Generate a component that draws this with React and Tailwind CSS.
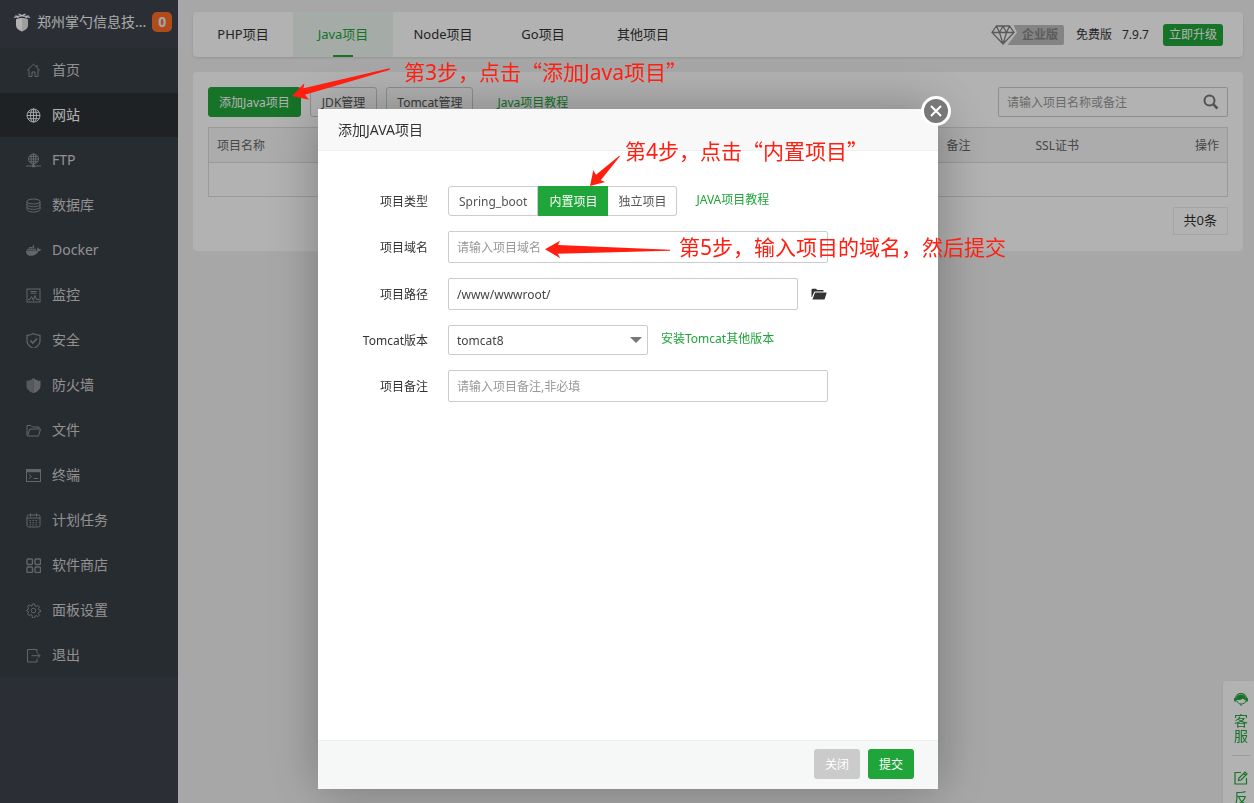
import { useState } from 'react';
import { FaDocker } from 'react-icons/fa';

const icons = {
  home: (
    <path d="M1 7.500 7.500 1.200 14 7.500M3 6.500V13.500h3V9h3v4.500h3V6.500M11 2v2.500" />
  ),
  globe: (
    <>
      <circle cx="7.500" cy="7.500" r="6.500" />
      <ellipse cx="7.500" cy="7.500" rx="3" ry="6.500" />
      <path d="M7.500 1v13M1 7.500h13M2.200 4.300h10.600M2.200 10.700h10.600" />
    </>
  ),
  ftp: (
    <>
      <circle cx="7.500" cy="6" r="5" />
      <ellipse cx="7.500" cy="6" rx="2.300" ry="5" />
      <path d="M7.500 1v12M2.500 6h10M3.300 3.500h8.400M3.300 8.500h8.400M0 13h15" />
      <path d="M6 13h3" strokeWidth="2.500" />
    </>
  ),
  database: (
    <>
      <ellipse cx="7.500" cy="3.500" rx="6.500" ry="2.500" />
      <path d="M1 3.500v8c0 1.400 2.900 2.500 6.500 2.500s6.500-1.100 6.500-2.500v-8M1 6.200c0 1.400 2.900 2.500 6.500 2.500S14 7.600 14 6.200M1 8.900c0 1.400 2.900 2.500 6.500 2.500s6.500-1.100 6.500-2.500" />
    </>
  ),
  monitor: (
    <>
      <rect x="1" y="1" width="13" height="13" />
      <path d="M4.500 3.500h6M4.500 5.200h6M2 11.500h2l1.500-3 2 4 1.500-5 1.500 4H13" />
    </>
  ),
  shield: (
    <>
      <path d="M7.500 0.500C5.500 2 3.500 2.200 1 2.300V8c0 3.500 3 5.800 6.500 7.500C11 13.800 14 11.500 14 8V2.300C11.500 2.200 9.500 2 7.500 0.500z" strokeWidth="1.200" />
      <path d="m4.300 7.500 2.500 2.500 4.200-4.500" strokeWidth="1.600" />
    </>
  ),
  firewall: (
    <>
      <path d="M7.500 0 5.800 1v1L4.200 1.500v1.200L2.800 2v1L0.500 2.500V8c0 3.500 3.500 5.800 7 7.500z" fill="currentColor" stroke="none" opacity="0.800" />
      <path d="m7.500 0 1.700 1v1l1.600-.5v1.200l1.400-.7v1l2.300-.5V8c0 3.500-3.500 5.800-7 7.500z" fill="currentColor" stroke="none" />
    </>
  ),
  folder: (
    <path d="M1 12.500V2.500h4l1.500 1.500h6.500v2M1.500 13 3.800 6H14.500L12.500 13z" />
  ),
  terminal: (
    <>
      <rect x="0.500" y="1.500" width="14" height="12" />
      <path d="M0.500 3h14" strokeWidth="2.500" />
      <path d="m3 6.500 2.500 2L3 10.500M7.500 10.500H12" />
    </>
  ),
  calendar: (
    <>
      <rect x="1" y="2" width="13" height="12" rx="1.500" />
      <path d="M1 5h13M4.500 0.500v3M10.500 0.500v3" />
      <path d="M3.500 7.500h8M3.500 9.700h8M3.500 11.900h8" strokeDasharray="1.500 1.500" />
    </>
  ),
  store: (
    <g strokeWidth="1.400">
      <rect x="1" y="1" width="5.500" height="5.500" rx="1" />
      <rect x="9" y="1" width="5.500" height="5.500" rx="1" />
      <rect x="1" y="9" width="5.500" height="5.500" rx="1" />
      <rect x="9" y="9" width="5.500" height="5.500" rx="1" />
    </g>
  ),
  gear: (
    <>
      <circle cx="7.500" cy="7.500" r="2.300" />
      <path d="M6.400 1h2.200l.4 1.900 1.200.5 1.700-1 1.500 1.500-1 1.700.5 1.200 1.600.4v1.600l-1.600.4-.5 1.200 1 1.700-1.500 1.500-1.700-1-1.200.5-.4 1.900H6.400L6 12.100l-1.200-.5-1.700 1-1.500-1.500 1-1.700-.5-1.200L.800 8V7l1.300-.8.5-1.200-1-1.700 1.500-1.500 1.700 1L6 2.900z" />
    </>
  ),
  exit: <path d="M11 4.500V1.500H1.500v12.500H11v-3M5.500 7.700h8.500M11.500 5.200 14 7.700l-2.500 2.500" />,
};

const menu = [
  { name: '首页', icon: 'home' },
  { name: '网站', icon: 'globe', active: true },
  { name: 'FTP', icon: 'ftp' },
  { name: '数据库', icon: 'database' },
  { name: 'Docker', icon: 'docker' },
  { name: '监控', icon: 'monitor' },
  { name: '安全', icon: 'shield' },
  { name: '防火墙', icon: 'firewall' },
  { name: '文件', icon: 'folder' },
  { name: '终端', icon: 'terminal' },
  { name: '计划任务', icon: 'calendar' },
  { name: '软件商店', icon: 'store' },
  { name: '面板设置', icon: 'gear' },
  { name: '退出', icon: 'exit' },
];

const tabs = ['PHP项目', 'Java项目', 'Node项目', 'Go项目', '其他项目'];
const projectTypes = ['Spring_boot', '内置项目', '独立项目'];

function MenuIcon({ name }) {
  if (name === 'docker') return <FaDocker className="size-[15px]" />;
  return (
    <svg className="size-[15px]" viewBox="0 0 15 15" fill="none" stroke="currentColor" strokeWidth="1">
      {icons[name]}
    </svg>
  );
}

function Sidebar() {
  return (
    <aside className="w-[178px] shrink-0 bg-[#3e444d]">
      <div className="flex h-12 items-center pl-[13px] pb-1">
        <svg className="mr-1.5 h-[19px] w-[18px] shrink-0 text-white" viewBox="0 0 18 19" fill="none" stroke="currentColor">
          <path d="M1 4.500C5 2.200 13 2.200 17 4.500M2.500 2.500l3 2.500M15.500 2.500l-3 2.500M5.500 1l3.500 1.500L12.500 1" strokeWidth="1.300" />
          <path d="M3 6.200C5 5.300 7 5 9 5v13.500C5.500 17 3 15.500 3 12z" fill="currentColor" stroke="none" />
          <path d="M15 6.200C13 5.300 11 5 9 5v13.500c3.500-1.500 6-3 6-6.500z" fill="currentColor" stroke="none" opacity="0.850" />
        </svg>
        <span className="text-sm whitespace-nowrap text-[#f5f5f5]">郑州掌勺信息技...</span>
        <span className="ml-1.5 flex size-5 shrink-0 items-center justify-center rounded-[5px] bg-[#fc6d26] text-sm font-bold text-[#eee]">0</span>
      </div>
      <nav className="flex flex-col gap-px bg-[#383f47]">
        {menu.map((item) => (
          <a
            key={item.name}
            href="#"
            className={
              item.active
                ? 'flex h-11 items-center gap-[11px] bg-[#2d3136] pl-[26px] text-sm text-white'
                : 'flex h-11 items-center gap-[11px] pl-[26px] text-sm text-[#d0d0d0]'
            }
          >
            <span className={item.active ? 'text-[#eee]' : 'text-[#8e9194]'}>
              <MenuIcon name={item.icon} />
            </span>
            {item.name}
          </a>
        ))}
      </nav>
    </aside>
  );
}

function TopBar() {
  return (
    <header className="flex h-[45px] items-center justify-between rounded bg-white pr-5 shadow">
      <nav className="flex h-full">
        {tabs.map((tab) => (
          <a
            key={tab}
            href="#"
            className={
              tab === 'Java项目'
                ? 'relative flex w-[100px] items-center justify-center bg-[#edf7ef] text-[13px] text-[#20a53a]'
                : 'flex w-[100px] items-center justify-center text-[13px] text-[#333]'
            }
          >
            {tab}
            {tab === 'Java项目' && <span className="absolute bottom-0 h-0.5 w-5 bg-[#20a53a]" />}
          </a>
        ))}
      </nav>
      <div className="flex items-center text-xs text-[#333]">
        <div className="flex items-center">
          <svg className="h-5 w-[26px]" viewBox="0 0 26 20" fill="none" stroke="#838383" strokeWidth="1.300">
            <path d="M26 0h-3.500L26 7.500 16.500 20H26z" fill="#bdbdbd" stroke="none" />
            <path d="M5.500 1h13L23 7.500 12 19 1 7.500zM1 7.500h22M5.500 1l3 6.500L12 19l3.500-11.500 3-6.500M8.500 7.500 12 1l3.500 6.500" />
          </svg>
          <span className="flex h-5 items-center rounded-r-xs bg-[#bdbdbd] pr-1.5 pl-[5px] text-xs font-bold text-[#858585]">企业版</span>
        </div>
        <span className="ml-3">免费版</span>
        <span className="ml-2.5">7.9.7</span>
        <button className="ml-3.5 h-[22px] rounded-[3px] bg-[#20a53a] px-1.5 text-white">立即升级</button>
      </div>
    </header>
  );
}

function ProjectList() {
  return (
    <main className="mt-[15px] rounded bg-white p-[15px] pb-4 text-xs text-[#555]">
      <div className="flex items-center justify-between">
        <div className="flex items-center">
          <button className="h-[30px] rounded-[3px] border border-[#20a53a] bg-[#20a53a] px-2.5 pt-0.5 text-white">添加Java项目</button>
          <button className="ml-[9px] h-[30px] rounded-[3px] border border-[#ccc] px-[11px] pt-0.5">JDK管理</button>
          <button className="ml-[9px] h-[30px] rounded-[3px] border border-[#ccc] px-2.5 pt-0.5">Tomcat管理</button>
          <a href="#" className="ml-6 pt-0.5 text-[#20a53a]">Java项目教程</a>
        </div>
        <div className="flex h-[30px] w-[230px] items-center rounded-xs border border-[#ccc] pr-2">
          <input aria-label="搜索" placeholder="请输入项目名称或备注" className="min-w-0 flex-1 px-2 pt-0.5 outline-none placeholder:text-[#999]" />
          <button aria-label="搜索">
            <svg className="size-4" viewBox="0 0 16 16" fill="none" stroke="#777" strokeWidth="2">
              <circle cx="6.500" cy="6.500" r="5" />
              <path d="m10.300 10.300 4.200 4.200" strokeWidth="2.600" />
            </svg>
          </button>
        </div>
      </div>
      <table className="mt-2.5 w-full table-fixed border-collapse border border-[#ddd] text-left text-[#666]">
        <thead className="bg-[#f6f6f6]">
          <tr className="h-[35px] border-b border-[#ddd]">
            <th className="px-2 pt-0.5 font-normal">项目名称</th>
            <th className="w-[89px] px-2 pt-0.5 font-normal">备注</th>
            <th className="w-[120px] px-2 pt-0.5 font-normal">SSL证书</th>
            <th className="w-20 px-2 pt-0.5 text-right font-normal">操作</th>
          </tr>
        </thead>
        <tbody>
          <tr className="h-[34px]">
            <td colSpan={4} />
          </tr>
        </tbody>
      </table>
      <div className="mt-2.5 flex justify-end">
        <span className="flex h-7 items-center border border-[#ececec] px-2.5 text-[13px] text-[#333]">共0条</span>
      </div>
    </main>
  );
}

function ServiceBar() {
  return (
    <div className="fixed top-[681px] right-0 flex w-[31px] flex-col rounded-tl bg-white pt-3 pl-[11px] text-sm leading-[15px] text-[#20a53a] shadow">
      <a href="#" className="w-3.5">
        <svg className="mb-[7px] h-[13px] w-3.5" viewBox="0 0 14 13" fill="none" stroke="currentColor">
          <path d="M1.500 6a5.500 5.500 0 0 1 11 0" strokeWidth="1.200" />
          <path d="M2 7C2 3 4.500 1.500 7 1.500S12 3 12 7C10.500 7 9.500 6.300 9 5.500 7.500 6.700 5 7.200 2 7z" fill="currentColor" stroke="none" />
          <path d="M1.300 5v3.500M12.700 5v3.500" strokeWidth="2.400" />
          <path d="M3 8c.6 2 2 3 4 3s4.500-1 5-3M6 12h2" />
        </svg>
        客服
      </a>
      <span className="mt-3 -ml-0.5 h-px w-[18px] bg-[#ddd]" />
      <a href="#" className="mt-[15px] w-3.5">
        <svg className="mb-[5px] size-3.5" viewBox="0 0 14 14" fill="none" stroke="currentColor" strokeWidth="1.200">
          <path d="M7 1.500H1v11.500h11.500V7" />
          <path d="m4.500 9.500.5-2.500 6-6 2 2-6 6zM9.500 2.500l2 2" />
        </svg>
        反馈
      </a>
    </div>
  );
}

function FormRow({ label, htmlFor, children }) {
  return (
    <div className="flex items-center">
      <label htmlFor={htmlFor} className="mr-5 w-[110px] pt-0.5 text-right text-[#333]">{label}</label>
      {children}
    </div>
  );
}

// full-width quotes, the latin font has narrow ones
function Quoted({ children }) {
  return (
    <>
      <span className="font-['Noto_Sans_CJK_SC',sans-serif]">“</span>
      {children}
      <span className="font-['Noto_Sans_CJK_SC',sans-serif]">”</span>
    </>
  );
}

function Annotations() {
  return (
    <div className="pointer-events-none text-[21px] leading-7 whitespace-nowrap text-[#ff1e10]">
      <svg className="absolute -top-[41px] -left-[26px] h-8 w-[98px]" viewBox="0 0 98 32" fill="currentColor">
        <path d="M0 28 12.300 15.300 11.500 20.300 97.500.300 98 1.700 13 26.700 17 31.700z" />
      </svg>
      <p className="absolute -top-[52px] left-[86px]">第3步，点击<Quoted>添加Java项目</Quoted></p>

      <svg className="absolute top-[46px] left-[272px] h-8 w-[30px]" viewBox="0 0 30 32" fill="currentColor">
        <path d="M0 31 3.300 15.300 6 19.700 29.300.700 30 1.300 10.700 25.300 15.300 27z" />
      </svg>
      <p className="absolute top-[27px] left-[307px]">第4步，点击<Quoted>内置项目</Quoted></p>

      <svg className="absolute top-[131px] left-[227px] h-[19px] w-[125px]" viewBox="0 0 125 19" fill="currentColor">
        <path d="M0 9.300 15 .700 13 5 125 9.700V10.700L12.700 13.700 15.300 18.300z" />
      </svg>
      <p className="absolute top-[124px] left-[361px]">第5步，输入项目的域名，然后提交</p>
    </div>
  );
}

function AddProjectDialog() {
  const [type, setType] = useState('内置项目');
  const [path, setPath] = useState('/www/wwwroot/');

  return (
    <div className="fixed inset-0 flex items-start justify-center bg-black/30 pt-[109px] pl-0.5">
      <div role="dialog" aria-label="添加JAVA项目" className="relative flex min-h-[680px] w-[620px] flex-col bg-white text-xs text-[#444] shadow-[1px_1px_50px_rgba(0,0,0,0.3)]">
        <h2 className="h-[42px] border-b border-[#eee] bg-[#f8f8f8] pl-5 text-sm leading-[41px] text-[#333]">添加JAVA项目</h2>
        <button aria-label="关闭" className="absolute -top-[13px] -right-[13px] flex size-[30px] items-center justify-center rounded-full border-[3px] border-white bg-[#787878]">
          <svg className="size-3" viewBox="0 0 12 12" stroke="#fff" strokeWidth="2">
            <path d="m1 1 10 10M11 1 1 11" />
          </svg>
        </button>

        <form className="flex flex-1 flex-col gap-[15px] pt-[35px]">
          <FormRow label="项目类型">
            <div className="flex h-[30px]">
              {projectTypes.map((item) => (
                <button
                  key={item}
                  type="button"
                  onClick={() => setType(item)}
                  className={
                    item === type
                      ? 'border border-[#20a53a] bg-[#20a53a] px-2.5 pt-0.5 text-white'
                      : 'border border-[#ccc] px-2.5 pt-0.5 text-[#555] first:rounded-l-[3px] last:rounded-r-[3px] last:border-l-0'
                  }
                >
                  {item}
                </button>
              ))}
            </div>
            <a href="#" className="ml-[19px] pb-0.5 text-[#20a53a]">JAVA项目教程</a>
          </FormRow>
          <FormRow label="项目域名" htmlFor="domain">
            <input id="domain" placeholder="请输入项目域名" className="h-8 w-[380px] rounded-xs border border-[#ccc] px-2 outline-none placeholder:text-[#999]" />
          </FormRow>
          <FormRow label="项目路径" htmlFor="path">
            <input id="path" value={path} onChange={(e) => setPath(e.target.value)} className="h-8 w-[350px] rounded-xs border border-[#ccc] px-2 outline-none" />
            <button type="button" aria-label="选择目录" className="ml-[13px]">
              <svg className="h-3 w-4" viewBox="0 0 16 12" fill="#333">
                <path d="M.500 9V2Q.500 .800 1.500.800H5L6.200 2H12.500V3.500H4.200Q3.400 3.500 3 4.300L1 9z" />
                <path d="M4 4.500H15.200Q15.800 4.500 15.600 5.100L13.700 10.900Q13.500 11.500 12.800 11.500H1.500z" />
              </svg>
            </button>
          </FormRow>
          <FormRow label="Tomcat版本" htmlFor="tomcat">
            <div className="relative">
              <select id="tomcat" className="h-[30px] w-[200px] appearance-none rounded-xs border border-[#ccc] px-2 pt-0.5 outline-none">
                <option>tomcat8</option>
              </select>
              <svg className="pointer-events-none absolute top-3 right-1.5 h-1.5 w-3" viewBox="0 0 12 6" fill="#777">
                <path d="M0 0h12L6 6z" />
              </svg>
            </div>
            <a href="#" className="ml-[13px] pb-0.5 text-[#20a53a]">安装Tomcat其他版本</a>
          </FormRow>
          <FormRow label="项目备注" htmlFor="remark">
            <input id="remark" placeholder="请输入项目备注,非必填" className="h-8 w-[380px] rounded-xs border border-[#ccc] px-2 outline-none placeholder:text-[#999]" />
          </FormRow>
        </form>

        <div className="flex justify-end gap-2 border-t border-[#edf0f0] bg-[#f6f8f8] pt-2 pr-6 pb-2.5 text-white">
          <button className="h-[30px] rounded-[3px] bg-[#cbcbcb] px-[11px] pt-0.5">关闭</button>
          <button className="h-[30px] rounded-[3px] bg-[#20a53a] px-[11px] pt-0.5">提交</button>
        </div>

        <Annotations />
      </div>
    </div>
  );
}

export default function App() {
  return (
    <div className="flex min-h-screen bg-[#f0f0f0] font-['Noto_Sans','Noto_Sans_CJK_SC',sans-serif]">
      <Sidebar />
      <div className="min-w-0 flex-1 px-[15px] pt-3 pr-[11px]">
        <TopBar />
        <ProjectList />
      </div>
      <ServiceBar />
      <AddProjectDialog />
    </div>
  );
}
